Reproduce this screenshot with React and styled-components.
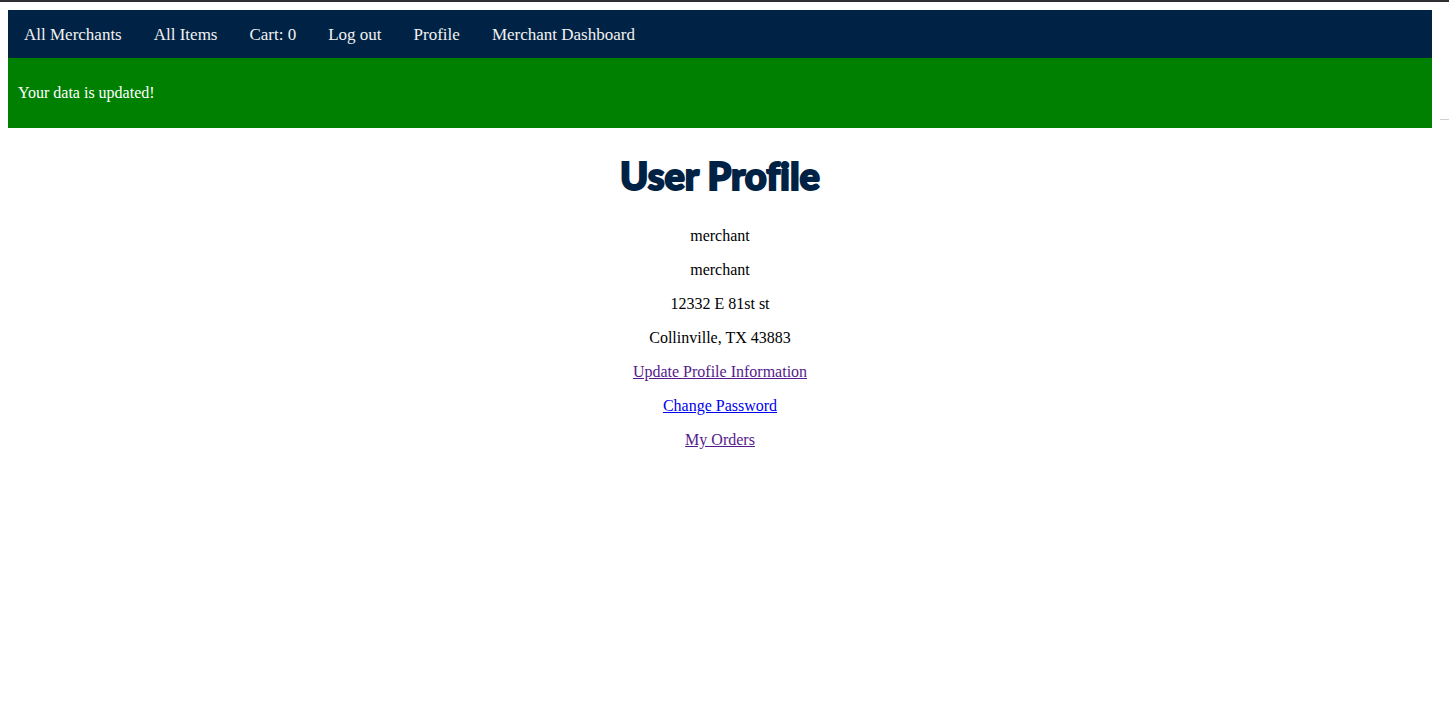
import React from "react";
import styled, { createGlobalStyle } from "styled-components";

const GlobalStyle = createGlobalStyle`
  body {
    margin: 0;
    background: #fff;
    color: #000;
    font: 16px/18px "Liberation Serif", "Times New Roman", serif;
  }
`;

const Window = styled.div`
  display: grid;
  grid-template-columns: 1fr 9px;
  border-top: 2px solid #302e33;
`;

const Page = styled.div`
  padding: 8px;
`;

const Gutter = styled.div`
  height: 117px;
  border-bottom: 1px solid #d0d0d0;
`;

const NavBar = styled.nav`
  display: flex;
  background: #002244;
`;

const NavLink = styled.a`
  padding: 15px 16px 13px;
  color: #f2f2f2;
  font-size: 17px;
  line-height: 20px;
  text-decoration: none;
`;

const Flash = styled.div`
  padding: 26px 10px;
  background: #008000;
  color: #fff;
`;

const Profile = styled.main`
  display: flex;
  flex-direction: column;
  align-items: center;
  gap: 16px;
`;

const Title = styled.h1`
  margin: 20px 0 8px;
  color: #002244;
  font: 900 38px/55px "Marker Felt", Lato, sans-serif;
  font-variant-ligatures: none;
  -webkit-text-stroke: 2px #002244;
`;

const Detail = styled.p`
  margin: 0;
`;

const ProfileLink = styled.a`
  color: ${({ $visited }) => ($visited ? "#551a8b" : "#0000ee")};
  text-decoration: underline;
`;

const navItems = ["All Merchants", "All Items", "Cart: 0", "Log out", "Profile", "Merchant Dashboard"];
const details = ["merchant", "merchant", "12332 E 81st st", "Collinville, TX 43883"];
const links = [
  { label: "Update Profile Information", visited: true },
  { label: "Change Password", visited: false },
  { label: "My Orders", visited: true },
];

export default function App() {
  return (
    <>
      <GlobalStyle />
      <Window>
        <Page>
          <NavBar>
            {navItems.map((label) => (
              <NavLink key={label} href="#">{label}</NavLink>
            ))}
          </NavBar>
          <Flash role="status">Your data is updated!</Flash>
          <Profile>
            <Title>User Profile</Title>
            {details.map((text, i) => (
              <Detail key={i}>{text}</Detail>
            ))}
            {links.map(({ label, visited }) => (
              <Detail key={label}>
                <ProfileLink href="#" $visited={visited}>{label}</ProfileLink>
              </Detail>
            ))}
          </Profile>
        </Page>
        <Gutter />
      </Window>
    </>
  );
}
